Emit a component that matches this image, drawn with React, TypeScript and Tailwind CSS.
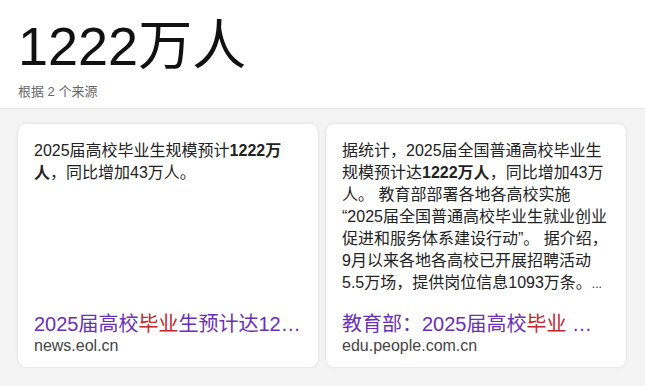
const font = {
  fontFamily: '"Liberation Sans", "Noto Sans CJK SC", sans-serif',
};

function ResultCard({
  body,
  title,
  domain,
}: {
  body: React.ReactNode;
  title: React.ReactNode;
  domain: string;
}) {
  return (
    <div className="flex h-[243px] w-[300px] flex-col rounded-lg bg-white px-4 pt-4 pb-[11px] shadow-[0_0_3px_rgba(0,0,0,0.12)]">
      <div className="text-[16px] leading-[22px] text-[#222]">{body}</div>
      <div className="mt-auto">
        <div className="whitespace-nowrap text-[20px] leading-[24px] text-[#6a2fb3]">
          {title}
        </div>
        <div className="text-[16px] leading-[20px] text-[#444]">{domain}</div>
      </div>
    </div>
  );
}

export default function App() {
  return (
    <div className="h-[386px] w-[645px] bg-[#f4f4f4]" style={font}>
      <div className="h-[109px] border-b border-[#e3e3e3] bg-white px-[18px] pt-[19px]">
        <div className="text-[54px] leading-[54px] text-[#111]">1222万人</div>
        <div className="mt-[11px] text-[13px] leading-[16px] text-[#666]">
          根据 2 个来源
        </div>
      </div>
      <div className="flex gap-2 pl-[18px] pt-[15px]">
        <ResultCard
          body={
            <>
              <div>
                2025届高校毕业生规模预计<b>1222万</b>
              </div>
              <div>
                <b>人</b>，同比增加43万人。
              </div>
            </>
          }
          title={
            <>
              2025届高校<span className="text-[#c0262d]">毕业</span>生预计达12…
            </>
          }
          domain="news.eol.cn"
        />
        <ResultCard
          body={
            <div className="whitespace-nowrap">
              <div>据统计，2025届全国普通高校毕业生</div>
              <div>
                规模预计达<b>1222万人</b>，同比增加43万
              </div>
              <div>人。 教育部部署各地各高校实施</div>
              <div>“2025届全国普通高校毕业生就业创业</div>
              <div>促进和服务体系建设行动”。 据介绍，</div>
              <div>9月以来各地各高校已开展招聘活动</div>
              <div>
                5.5万场，提供岗位信息1093万条。<span className="text-[12px]">...</span>
              </div>
            </div>
          }
          title={
            <>
              教育部：2025届高校<span className="text-[#c0262d]">毕业</span> …
            </>
          }
          domain="edu.people.com.cn"
        />
      </div>
    </div>
  );
}
